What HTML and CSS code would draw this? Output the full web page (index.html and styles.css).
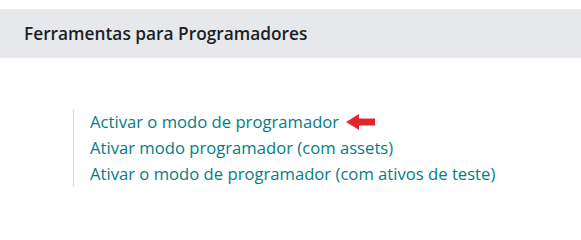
FILE: index.html
```html
<!DOCTYPE html>
<html>
<head>
<meta charset="utf-8">
<link rel="stylesheet" href="styles.css">
</head>
<body>
<div class="page">
  <div class="section-title">Ferramentas para Programadores</div>
  <div class="links">
    <div class="link-row">
      <a class="link" href="#">Activar o modo de programador</a>
      <svg class="arrow" width="30" height="16" viewBox="0 0 30 16"><path d="M0 8 L13 0 L13 4.5 L29 4.5 L29 11.5 L13 11.5 L13 16 Z" fill="#e3262e"/></svg>
    </div>
    <div class="link-row"><a class="link" href="#">Ativar modo programador (com assets)</a></div>
    <div class="link-row"><a class="link" href="#">Ativar o modo de programador (com ativos de teste)</a></div>
  </div>
</div>
</body>
</html>
```
FILE: styles.css
```css
html, body {
  margin: 0;
  padding: 0;
  background: #ffffff;
}
.page {
  padding-top: 9px;
  font-family: "Open Sans", "Noto Sans", sans-serif;
}
.section-title {
  background: #e7e8eb;
  height: 49px;
  box-sizing: border-box;
  padding-left: 24px;
  display: flex;
  align-items: center;
  font-size: 17.3px;
  font-weight: 600;
  color: #1c1f26;
}
.links {
  margin-top: 51px;
  margin-left: 73px;
  border-left: 1px solid #dcdcdf;
  padding-left: 16px;
}
.link-row {
  height: 26px;
  display: flex;
  align-items: center;
  gap: 7px;
}
.link {
  color: #017e84;
  text-decoration: none;
  font-size: 16.65px;
  line-height: 26px;
}
.arrow {
  display: block;
}
```
